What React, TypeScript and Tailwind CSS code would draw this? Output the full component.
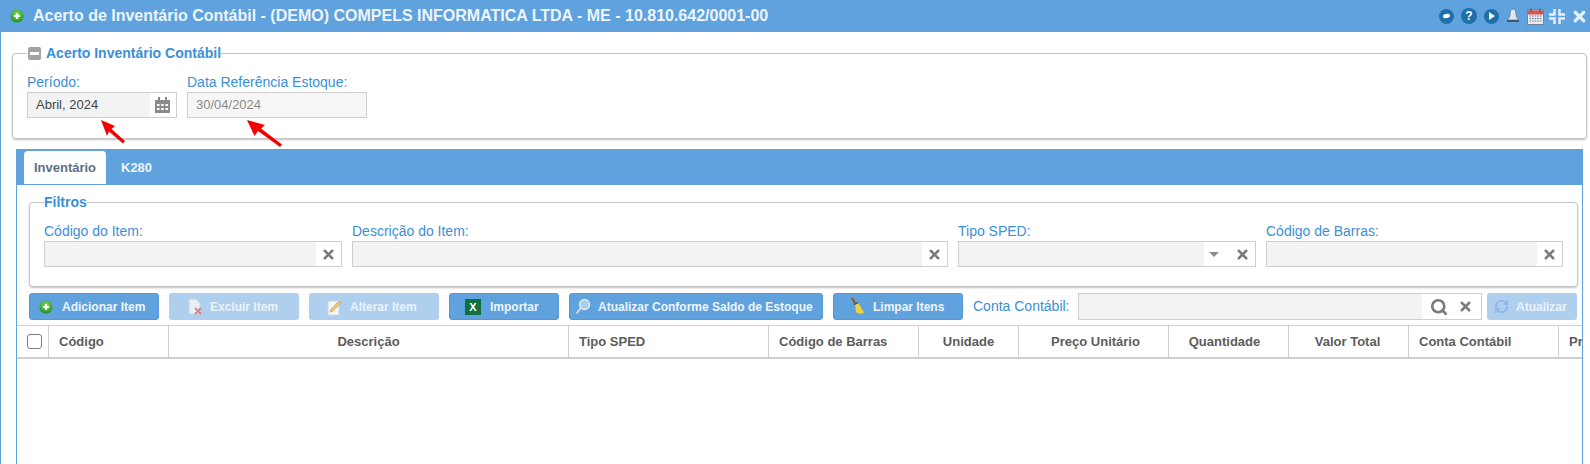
import React from 'react';
import { Search, X, RefreshCw } from 'lucide-react';

const font = 'font-["Liberation_Sans",Arial,sans-serif]';

const PlusBall = ({ size = 14 }: { size?: number }) => (
  <svg width={size} height={size} viewBox="0 0 16 16" className="shrink-0">
    <defs>
      <radialGradient id="plusBall" cx="50%" cy="35%" r="70%">
        <stop offset="0%" stopColor="#7fe05a" />
        <stop offset="100%" stopColor="#178a1a" />
      </radialGradient>
    </defs>
    <circle cx="8" cy="8" r="7.5" fill="url(#plusBall)" />
    <path d="M8 4.5v7M4.5 8h7" stroke="#fff" strokeWidth="2.4" />
  </svg>
);

const ClearIcon = () => <X className="w-[15px] h-[15px] text-[#7a7a7a]" strokeWidth={4} />;

const Field = ({ label, className, children }: { label: string; className: string; children?: React.ReactNode }) => (
  <div className={className}>
    <div className="text-[14px] leading-[16px] mb-[2px] text-[#3b8fd6]">{label}</div>
    <div className="flex h-[26px] border border-[#cfcfcf] bg-white">
      <div className="flex-1 bg-[#f3f3f3]" />
      <div className="flex items-center justify-end gap-[16px] px-[5px]">
        {children}
        <ClearIcon />
      </div>
    </div>
  </div>
);

const ToolButton = ({ label, icon, className, disabled }: { label: string; icon: React.ReactNode; className: string; disabled?: boolean }) => (
  <button
    className={`flex items-center h-[27px] rounded-[3px] text-[12px] font-bold whitespace-nowrap shrink-0 ${className} ${
      disabled ? 'bg-[#afcfee] text-[#eaf3fb]' : 'bg-[#5fa2dd] text-[#eef5fb] border border-[#5597d2]'
    }`}
  >
    {icon}
    <span>{label}</span>
  </button>
);

const DocDelete = () => (
  <svg width="18" height="18" viewBox="0 0 18 18" className="shrink-0 ml-[17px] mr-[6px]">
    <path d="M3 1h7l4 4v11H3z" fill="#e8eff8" stroke="#c4d4e6" />
    <path d="M9 10l6 6M15 10l-6 6" stroke="#d8817f" strokeWidth="1.8" />
  </svg>
);

const PencilDoc = () => (
  <svg width="16" height="18" viewBox="0 0 16 18" className="shrink-0 ml-[18px] mr-[7px]">
    <rect x="1" y="3" width="11" height="14" fill="#f6f6f4" stroke="#cfd8e2" />
    <path d="M3 14l1-3 8-8 2 2-8 8z" fill="#ecc878" stroke="#c8a25c" strokeWidth=".7" />
  </svg>
);

const ExcelIcon = () => (
  <div className="w-[16px] h-[16px] bg-[#107040] text-white text-[11px] font-bold leading-[16px] text-center shrink-0 ml-[15px] mr-[9px]">
    X
  </div>
);

const Magnifier = () => (
  <svg width="20" height="18" viewBox="0 0 20 18" className="shrink-0 ml-[5px] mr-[3px]">
    <circle cx="9.5" cy="6.5" r="5" fill="#a9cdec" stroke="#e4eef8" strokeWidth="1.3" />
    <path d="M5.8 10L1.5 15.5" stroke="#d5dbe0" strokeWidth="2" />
  </svg>
);

const Broom = () => (
  <svg width="20" height="20" viewBox="0 0 20 20" className="shrink-0 ml-[15px] mr-[4px]">
    <path d="M3 1l4 7" stroke="#8a5a2a" strokeWidth="2" />
    <path d="M6 7l3-1.5 6 10-3 1.5-5-1.5z" fill="#efd23c" />
    <path d="M5 7.5l4-2" stroke="#3a5a8a" strokeWidth="1.5" />
  </svg>
);

const CircleBtn = ({ children, size = 15 }: { children: React.ReactNode; size?: number }) => (
  <div style={{ width: size, height: size }} className="rounded-full bg-[#1f6fa8] flex items-center justify-center shrink-0">
    {children}
  </div>
);

const Bell = () => (
  <svg width="14" height="16" viewBox="0 0 14 16">
    <path d="M7 1c-2 0-3 2-3 5 0 3-2 5-3 6h12c-1-1-3-3-3-6 0-3-1-5-3-5z" fill="#dfe7ef" stroke="#5b7286" strokeWidth=".8" />
    <rect x="1" y="12" width="12" height="2" fill="#41586c" />
  </svg>
);

const CalendarColor = () => (
  <svg width="17" height="17" viewBox="0 0 17 17">
    <rect x=".5" y="2" width="16" height="14.5" fill="#e9edf1" stroke="#66727e" strokeWidth=".8" />
    <rect x="1" y="2.5" width="15" height="4" fill="#d9534f" />
    <path d="M4 .5v3M13 .5v3" stroke="#55606a" strokeWidth="1.4" />
    <path d="M2.5 8h12M2.5 10.5h12M2.5 13h12" stroke="#6a7682" strokeWidth="1.2" strokeDasharray="1.6 1" />
  </svg>
);

const CalendarGrey = () => (
  <svg width="15" height="16" viewBox="0 0 15 16">
    <path d="M0 3h15v13H0z" fill="#8a8a8a" />
    <path d="M3 0h2v4H3zM10 0h2v4h-2z" fill="#8a8a8a" />
    <path d="M2 7h2.5v2H2zM6.2 7h2.5v2H6.2zM10.5 7H13v2h-2.5zM2 11h2.5v2H2zM6.2 11h2.5v2H6.2zM10.5 11H13v2h-2.5z" fill="#fff" />
  </svg>
);

const Collapse = () => (
  <svg width="16" height="15" viewBox="0 0 16 15" className="-ml-[2px]">
    <path d="M5.5 0v5.5H0M10.5 0v5.5H16M5.5 15V9.5H0M10.5 15V9.5H16" fill="none" stroke="#e6eff8" strokeWidth="2.4" />
  </svg>
);

const columns = [
  { label: 'Código', width: 'w-[120px]', align: 'pl-[10px] text-left' },
  { label: 'Descrição', width: 'w-[400px]', align: 'text-center' },
  { label: 'Tipo SPED', width: 'w-[200px]', align: 'pl-[10px] text-left' },
  { label: 'Código de Barras', width: 'w-[150px]', align: 'pl-[10px] text-left' },
  { label: 'Unidade', width: 'w-[100px]', align: 'text-center' },
  { label: 'Preço Unitário', width: 'w-[150px]', align: 'pl-[4px] text-center' },
  { label: 'Quantidade', width: 'w-[120px]', align: 'pr-[8px] text-center' },
  { label: 'Valor Total', width: 'w-[120px]', align: 'pr-[2px] text-center' },
  { label: 'Conta Contábil', width: 'w-[150px]', align: 'pl-[10px] text-left' },
  { label: 'Preço', width: 'w-[120px]', align: 'pl-[10px] text-left' },
];

export default function App() {
  return (
    <div className={`${font} h-[464px] w-[1590px] overflow-hidden bg-white relative`}>
      {/* Title */}
      <div className="h-[32px] bg-[#5fa2dd] flex items-center pl-[10px] pr-[2px]">
        <PlusBall size={14} />
        <span className="ml-[9px] text-[16px] font-bold text-[#edf4fb]">
          Acerto de Inventário Contábil - (DEMO) COMPELS INFORMATICA LTDA - ME - 10.810.642/0001-00
        </span>
        <div className="ml-auto flex items-center gap-[7px]">
          <CircleBtn><div className="w-[7px] h-[4px] rounded-full bg-white -rotate-12" /></CircleBtn>
          <CircleBtn size={16}><span className="text-white text-[12px] font-bold leading-none">?</span></CircleBtn>
          <CircleBtn>
            <svg width="7" height="8" viewBox="0 0 7 8"><path d="M1 0l6 4-6 4z" fill="#fff" /></svg>
          </CircleBtn>
          <Bell />
          <CalendarColor />
          <Collapse />
          <X className="w-[17px] h-[17px] -ml-[1px] text-[#e6eff8]" strokeWidth={4.5} />
        </div>
      </div>

      <div className="absolute left-0 top-0 bottom-0 w-px bg-[#5fa2dd]" />

      {/* Acerto */}
      <fieldset className="mt-[13px] ml-[12px] mr-[3px] h-[94px] border border-[#c4c4c4] rounded-[4px] shadow-[0_1px_2px_rgba(0,0,0,0.25)] pl-[14px]">
        <legend className="pl-[1px] flex items-center text-[14px] font-bold text-[#3b8fd6] h-[16px]">
          <span className="w-[13px] h-[13px] rounded-[2px] bg-[#a3a3a3] flex items-center justify-center mr-[5px]">
            <span className="w-[9px] h-[3px] bg-white" />
          </span>
          Acerto Inventário Contábil
        </legend>
        <div className="flex gap-[10px] mt-[13px]">
          <div className="w-[150px]">
            <div className="text-[14px] leading-[16px] mb-[2px] text-[#3b8fd6]">Período:</div>
            <div className="flex h-[26px] border border-[#cfcfcf]">
              <div className="flex-1 bg-[#f3f3f3] pl-[8px] text-[13px] leading-[24px] text-[#444]">Abril, 2024</div>
              <div className="w-[26px] pr-[1px] flex items-center justify-center">
                <CalendarGrey />
              </div>
            </div>
          </div>
          <div className="w-[180px]">
            <div className="text-[14px] leading-[16px] mb-[2px] text-[#3b8fd6]">Data Referência Estoque:</div>
            <div className="h-[26px] border border-[#cfcfcf] bg-[#f6f6f6] pl-[8px] text-[13px] leading-[24px] text-[#8a8a8a]">30/04/2024</div>
          </div>
        </div>
      </fieldset>

      {/* Annotation arrows over the form */}
      <svg width="26" height="25" viewBox="0 0 26 25" className="absolute left-[100px] top-[119px]">
        <path d="M1 1L15 7 11.5 10 25 22 23 24.5 9 12.5 7 17z" fill="#f50000" />
      </svg>
      <svg width="38" height="30" viewBox="0 0 38 30" className="absolute left-[246px] top-[119px]">
        <path d="M1 1L19 6 15 9.5 36 25.5 34 28 12 12 8.5 17z" fill="#f50000" />
      </svg>

      {/* Panel */}
      <div className="ml-[16px] mr-[7px] mt-[10px] h-[320px] border-x border-[#5fa2dd]">
        <div className="h-[36px] bg-[#5fa2dd] flex items-end pl-[7px]">
          <div className="w-[82px] h-[33px] bg-white rounded-t-[4px] text-[13px] font-bold text-[#5f6f80] flex items-center justify-center mb-[1px]">
            Inventário
          </div>
          <div className="ml-[15px] h-[33px] text-[13px] font-bold text-[#eef5fb] flex items-center mb-[1px]">K280</div>
        </div>

        <fieldset className="mt-[9px] ml-[12px] mr-[4px] h-[93px] border border-[#c4c4c4] rounded-[4px] shadow-[0_1px_2px_rgba(0,0,0,0.25)] px-[14px]">
          <legend className="text-[14px] leading-[16px] font-bold text-[#3b8fd6]">Filtros</legend>
          <div className="flex gap-[10px] mt-[13px]">
            <Field label="Código do Item:" className="w-[298px]" />
            <Field label="Descrição do Item:" className="w-[596px]" />
            <Field label="Tipo SPED:" className="w-[298px]">
              <svg width="10" height="5" viewBox="0 0 10 5"><path d="M0 0h10L5 5z" fill="#8c8c8c" /></svg>
            </Field>
            <Field label="Código de Barras:" className="w-[297px]" />
          </div>
        </fieldset>

        {/* Toolbar */}
        <div className="mt-[6px] ml-[12px] flex items-center gap-[10px]">
          <ToolButton label="Adicionar Item" className="w-[130px]" icon={<span className="ml-[9px] mr-[9px]"><PlusBall size={14} /></span>} />
          <ToolButton label="Excluir Item" className="w-[130px]" disabled icon={<DocDelete />} />
          <ToolButton label="Alterar Item" className="w-[130px]" disabled icon={<PencilDoc />} />
          <ToolButton label="Importar" className="w-[110px]" icon={<ExcelIcon />} />
          <ToolButton label="Atualizar Conforme Saldo de Estoque" className="w-[254px]" icon={<Magnifier />} />
          <ToolButton label="Limpar Itens" className="w-[130px]" icon={<Broom />} />
          <span className="text-[14px] text-[#3b8fd6] w-[105px] shrink-0">Conta Contábil:</span>
          <div className="flex h-[27px] w-[404px] -ml-[10px] mr-[-5px] border border-[#cfcfcf]">
            <div className="flex-1 bg-[#f3f3f3]" />
            <div className="flex items-center gap-[10px] px-[8px]">
              <Search className="w-[18px] h-[18px] text-[#7a7a7a]" strokeWidth={3.5} />
              <ClearIcon />
            </div>
          </div>
          <ToolButton label="Atualizar" className="w-[90px]" disabled icon={<RefreshCw className="w-[15px] h-[15px] ml-[7px] mr-[7px] text-[#8fb7ea]" strokeWidth={3} />} />
        </div>

        {/* Grid header */}
        <div className="mt-[5px] h-[34px] flex border-t border-[#cfcfcf] border-b-2 border-b-[#cfcfcf] overflow-hidden text-[13px] font-bold text-[#5c5c5c]">
          <div className="w-[32px] shrink-0 flex items-center pl-[10px] border-r border-[#cfcfcf]">
            <span className="w-[15px] h-[15px] rounded-[3px] border border-[#7d7d7d] bg-white" />
          </div>
          {columns.map((c) => (
            <div key={c.label} className={`${c.width} ${c.align} shrink-0 border-r border-[#cfcfcf] leading-[31px]`}>
              {c.label}
            </div>
          ))}
        </div>
      </div>
    </div>
  );
}
